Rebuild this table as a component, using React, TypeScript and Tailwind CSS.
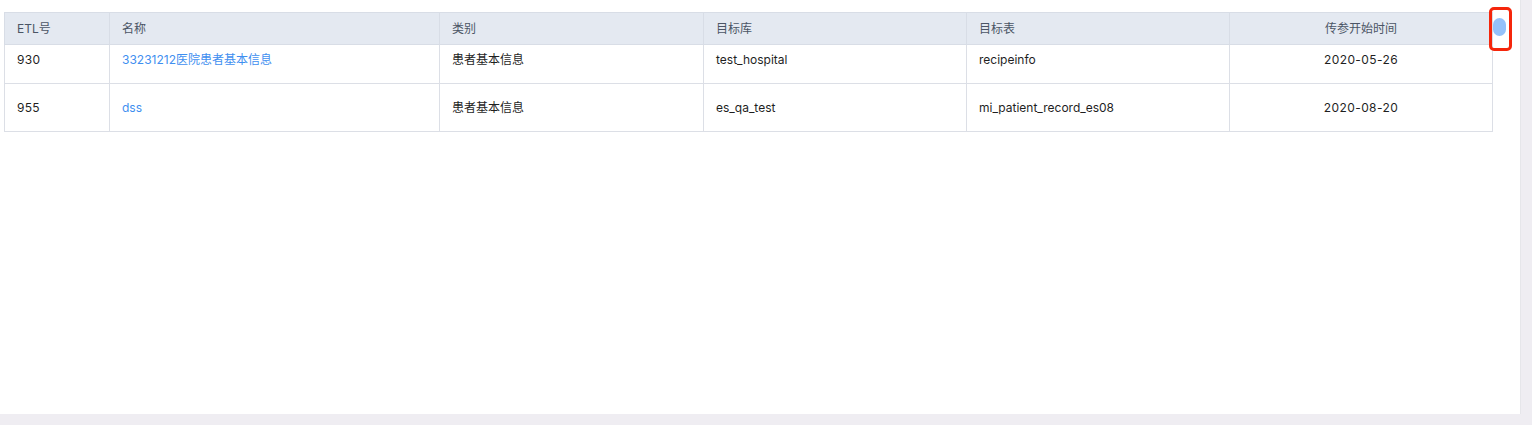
const rows = [
  { id: "930", name: "33231212医院患者基本信息", type: "患者基本信息", db: "test_hospital", table: "recipeinfo", date: "2020-05-26" },
  { id: "955", name: "dss", type: "患者基本信息", db: "es_qa_test", table: "mi_patient_record_es08", date: "2020-08-20" },
];

export default function App() {
  return (
    <div
      className="w-[1532px] h-[425px] bg-[#efedf2] flex text-[12px]"
      style={{ fontFamily: 'Inter, "Noto Sans CJK SC", sans-serif' }}
    >
      <div className="w-[1521px] h-[414px] bg-white border-r border-[#e6e6ea] flex pt-[12px] pl-[4px]">
        <div className="w-[1488px] flex flex-col">
          <table className="w-full border-collapse table-fixed">
            <colgroup>
              <col className="w-[105px]" />
              <col className="w-[330px]" />
              <col className="w-[264px]" />
              <col className="w-[263px]" />
              <col className="w-[263px]" />
              <col className="w-[263px]" />
            </colgroup>
            <thead>
              <tr className="bg-[#e4e9f1] text-[#4b5565] h-[32px]">
                <th className="border border-[#d8dde6] text-left font-normal pl-[12px]">ETL号</th>
                <th className="border border-[#d8dde6] text-left font-normal pl-[12px]">名称</th>
                <th className="border border-[#d8dde6] text-left font-normal pl-[12px]">类别</th>
                <th className="border border-[#d8dde6] text-left font-normal pl-[12px]">目标库</th>
                <th className="border border-[#d8dde6] text-left font-normal pl-[12px]">目标表</th>
                <th className="border border-[#d8dde6] text-center font-normal">传参开始时间</th>
              </tr>
            </thead>
            <tbody className="text-[#1f1f1f]">
              {rows.map((r, i) => (
                <tr key={r.id} className={i === 0 ? "h-[39px]" : "h-[48px]"}>
                  <td className={`border border-[#dcdfe6] pl-[12px] tracking-[0.3px] ${i === 0 ? "align-top pt-[6px]" : ""}`}>{r.id}</td>
                  <td className={`border border-[#dcdfe6] pl-[12px] text-[#3f8ff0] ${i === 0 ? "align-top pt-[6px]" : ""}`}>{r.name}</td>
                  <td className={`border border-[#dcdfe6] pl-[12px] ${i === 0 ? "align-top pt-[6px]" : ""}`}>{r.type}</td>
                  <td className={`border border-[#dcdfe6] pl-[12px] ${i === 0 ? "align-top pt-[6px]" : ""}`}>{r.db}</td>
                  <td className={`border border-[#dcdfe6] pl-[12px] ${i === 0 ? "align-top pt-[6px]" : ""}`}>{r.table}</td>
                  <td className={`border border-[#dcdfe6] text-center tracking-[0.4px] ${i === 0 ? "align-top pt-[6px]" : ""}`}>{r.date}</td>
                </tr>
              ))}
            </tbody>
          </table>
        </div>
        <div className="relative w-[28px]">
          <div className="absolute left-[-3px] top-[-5px] w-[23px] h-[44px] border-[3px] border-[#f5260b] rounded-[5px] flex pl-[1px] pt-[8px]">
            <div className="w-[13px] h-[18px] rounded-full bg-[#94c1fa]" />
          </div>
        </div>
      </div>
    </div>
  );
}
